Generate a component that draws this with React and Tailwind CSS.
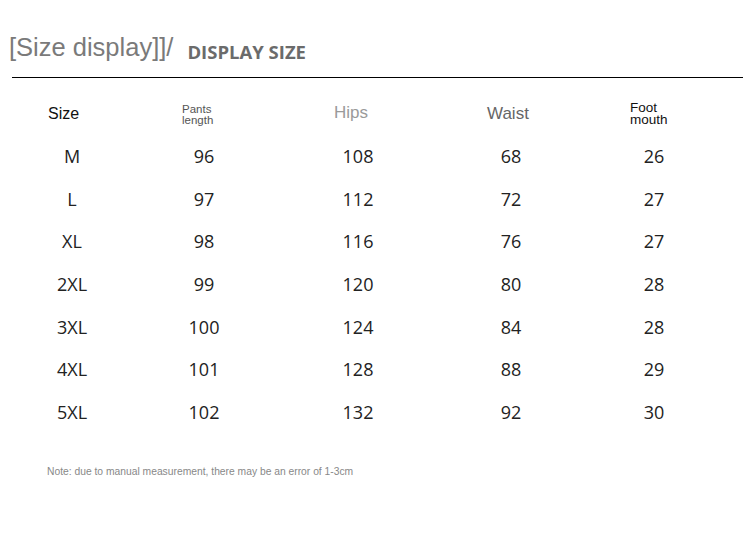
import React from "react";

const rows = [
  ["M", "96", "108", "68", "26"],
  ["L", "97", "112", "72", "27"],
  ["XL", "98", "116", "76", "27"],
  ["2XL", "99", "120", "80", "28"],
  ["3XL", "100", "124", "84", "28"],
  ["4XL", "101", "128", "88", "29"],
  ["5XL", "102", "132", "92", "30"],
];

const cols = "grid grid-cols-[144px_120px_188px_118px_168px]";

export default function App() {
  return (
    <div className="w-[750px] h-[544px] bg-white overflow-hidden">
      <div className="h-[77px] flex items-end pl-[9px] pb-[17px]">
        <span className="text-[25.5px] leading-none text-[#7a7a7a] font-['Liberation_Sans',sans-serif]">
          [Size display]]/
        </span>
        <span className="ml-[14px] text-[18.5px] leading-none font-bold text-[#6b6b6b] font-['Open_Sans',sans-serif] mb-[-1px]">
          DISPLAY SIZE
        </span>
      </div>
      <div className="ml-[12px] w-[731px] h-px bg-black" />

      <div className={`${cols} h-[57px] items-center font-['Liberation_Sans',sans-serif] pt-[14px]`}>
        <div className="pl-[48px] text-[16px] text-[#111]">Size</div>
        <div className="pl-[38px] text-[11.5px] leading-[11px] text-[#555] mb-[-2px]">
          Pants
          <br />
          length
        </div>
        <div className="pl-[70px] text-[17px] text-[#9a9a9a] mb-[2px]">Hips</div>
        <div className="pl-[35px] text-[17px] text-[#666]">Waist</div>
        <div className="pl-[60px] text-[13.5px] leading-[11.5px] text-[#111]">
          Foot
          <br />
          mouth
        </div>
      </div>

      <div className="font-['Open_Sans',sans-serif] text-[18px] text-[#222]">
        {rows.map((r) => (
          <div key={r[0]} className={`${cols} h-[42.7px] items-center text-center`}>
            {r.map((v, i) => (
              <div key={i}>{v}</div>
            ))}
          </div>
        ))}
      </div>

      <div className="mt-[30px] pl-[47px] text-[10.3px] text-[#888] font-['Liberation_Sans',sans-serif]">
        Note: due to manual measurement, there may be an error of 1-3cm
      </div>
    </div>
  );
}
